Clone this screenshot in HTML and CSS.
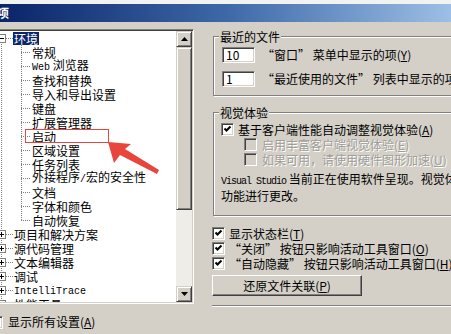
FILE: index.html
```html
<!DOCTYPE html>
<html lang="zh-CN">
<head>
<meta charset="utf-8">
<title>选项</title>
<link rel="stylesheet" href="styles.css">
</head>
<body>
<div class="screen">
  <div class="topstrip"></div>
  <div class="titlebar"><span class="title">项</span></div>

  <div class="main">
    <div class="treebox">
      <div class="tree">
        <div class="row root">
          <svg class="exp" width="9" height="9" viewBox="0 0 9 9"><rect x="0.5" y="0.5" width="8" height="8" fill="#fff" stroke="#808080"/><path d="M2 4.5h5" stroke="#000"/></svg>
          <span class="hconn"></span><span class="label sel">环境</span>
        </div>
        <div class="row child"><span class="conn"></span><span class="label">常规</span></div>
        <div class="row child"><span class="conn"></span><span class="label"><span class="lat">Web</span> 浏览器</span></div>
        <div class="row child"><span class="conn"></span><span class="label">查找和替换</span></div>
        <div class="row child"><span class="conn"></span><span class="label">导入和导出设置</span></div>
        <div class="row child"><span class="conn"></span><span class="label">键盘</span></div>
        <div class="row child"><span class="conn"></span><span class="label">扩展管理器</span></div>
        <div class="row child"><span class="conn"></span><span class="label">启动</span></div>
        <div class="row child"><span class="conn"></span><span class="label">区域设置</span></div>
        <div class="row child"><span class="conn"></span><span class="label">任务列表</span></div>
        <div class="row child"><span class="conn"></span><span class="label">外接程序<span class="lat">/</span>宏的安全性</span></div>
        <div class="row child"><span class="conn"></span><span class="label">文档</span></div>
        <div class="row child"><span class="conn"></span><span class="label">字体和颜色</span></div>
        <div class="row child last"><span class="conn"></span><span class="label">自动恢复</span></div>
        <div class="row root">
          <svg class="exp" width="9" height="9" viewBox="0 0 9 9"><rect x="0.5" y="0.5" width="8" height="8" fill="#fff" stroke="#808080"/><path d="M2 4.5h5M4.5 2v5" stroke="#000"/></svg>
          <span class="hconn"></span><span class="label">项目和解决方案</span>
        </div>
        <div class="row root">
          <svg class="exp" width="9" height="9" viewBox="0 0 9 9"><rect x="0.5" y="0.5" width="8" height="8" fill="#fff" stroke="#808080"/><path d="M2 4.5h5M4.5 2v5" stroke="#000"/></svg>
          <span class="hconn"></span><span class="label">源代码管理</span>
        </div>
        <div class="row root">
          <svg class="exp" width="9" height="9" viewBox="0 0 9 9"><rect x="0.5" y="0.5" width="8" height="8" fill="#fff" stroke="#808080"/><path d="M2 4.5h5M4.5 2v5" stroke="#000"/></svg>
          <span class="hconn"></span><span class="label">文本编辑器</span>
        </div>
        <div class="row root">
          <svg class="exp" width="9" height="9" viewBox="0 0 9 9"><rect x="0.5" y="0.5" width="8" height="8" fill="#fff" stroke="#808080"/><path d="M2 4.5h5M4.5 2v5" stroke="#000"/></svg>
          <span class="hconn"></span><span class="label">调试</span>
        </div>
        <div class="row root">
          <svg class="exp" width="9" height="9" viewBox="0 0 9 9"><rect x="0.5" y="0.5" width="8" height="8" fill="#fff" stroke="#808080"/><path d="M2 4.5h5M4.5 2v5" stroke="#000"/></svg>
          <span class="hconn"></span><span class="label"><span class="lat">IntelliTrace</span></span>
        </div>
        <div class="row root">
          <svg class="exp" width="9" height="9" viewBox="0 0 9 9"><rect x="0.5" y="0.5" width="8" height="8" fill="#fff" stroke="#808080"/><path d="M2 4.5h5M4.5 2v5" stroke="#000"/></svg>
          <span class="hconn"></span><span class="label">性能工具</span>
        </div>
      </div>
      <div class="vscroll">
        <div class="sbtn"><svg width="7" height="4" viewBox="0 0 7 4"><path d="M3.5 0L7 4H0z" fill="#000"/></svg></div>
        <div class="thumb"></div>
        <div class="track"></div>
        <div class="sbtn"><svg width="7" height="4" viewBox="0 0 7 4"><path d="M0 0H7L3.5 4z" fill="#000"/></svg></div>
      </div>
    </div>

    <div class="right">
      <div class="group g1">
        <div class="legend">最近的文件</div>
        <div class="frow first"><span class="input">10</span><span class="ftext">“窗口” 菜单中显示的项(<u>Y</u>)</span></div>
        <div class="frow"><span class="input">1</span><span class="ftext">“最近使用的文件” 列表中显示的项(<u>R</u>)</span></div>
      </div>

      <div class="group g2">
        <div class="legend">视觉体验</div>
        <div class="cbrow main-cb">
          <span class="cb"><svg width="11" height="11" viewBox="0 0 11 11"><path d="M2.5 4.5L4.5 6.5L8.5 2.5" fill="none" stroke="#000" stroke-width="2"/></svg></span>
          <span>基于客户端性能自动调整视觉体验(<u>A</u>)</span>
        </div>
        <div class="cbrow sub-cb disabled">
          <span class="cb off"></span>
          <span>启用丰富客户端视觉体验(<u>E</u>)</span>
        </div>
        <div class="cbrow sub-cb disabled">
          <span class="cb off"></span>
          <span>如果可用，请使用硬件图形加速(<u>U</u>)</span>
        </div>
        <div class="note">
          <div><span class="vs">Visual Studio</span> 当前正在使用软件呈现。视觉体验</div>
          <div>功能进行更改。</div>
        </div>
      </div>

      <div class="checks">
        <div class="cbrow">
          <span class="cb"><svg width="11" height="11" viewBox="0 0 11 11"><path d="M2.5 4.5L4.5 6.5L8.5 2.5" fill="none" stroke="#000" stroke-width="2"/></svg></span>
          <span>显示状态栏(<u>T</u>)</span>
        </div>
        <div class="cbrow">
          <span class="cb"><svg width="11" height="11" viewBox="0 0 11 11"><path d="M2.5 4.5L4.5 6.5L8.5 2.5" fill="none" stroke="#000" stroke-width="2"/></svg></span>
          <span>“关闭” 按钮只影响活动工具窗口(<u>O</u>)</span>
        </div>
        <div class="cbrow">
          <span class="cb"><svg width="11" height="11" viewBox="0 0 11 11"><path d="M2.5 4.5L4.5 6.5L8.5 2.5" fill="none" stroke="#000" stroke-width="2"/></svg></span>
          <span>“自动隐藏” 按钮只影响活动工具窗口(<u>H</u>)</span>
        </div>
      </div>

      <div class="button">还原文件关联(<u>P</u>)</div>
      <div class="sep"></div>
    </div>
  </div>

  <div class="footer">
    <span class="cb"></span>
    <span>显示所有设置(<u>A</u>)</span>
  </div>

  <div class="annot-box"></div>
  <svg class="annot-arrow" width="451" height="334" viewBox="0 0 451 334">
    <polygon points="108,142 131,144 125,149 159,170 157,174 120,155 114,163" fill="#e8453c"/>
  </svg>
</div>
</body>
</html>
```

FILE: styles.css
```css
* { box-sizing: border-box; }

html, body {
  margin: 0;
  padding: 0;
}

body {
  width: 451px;
  height: 334px;
  overflow: hidden;
  background: #d4d0c8;
  font-family: "Noto Sans CJK SC", "Liberation Sans", sans-serif;
  font-size: 12px;
  line-height: 14px;
  color: #000;
}

u { text-decoration: underline; text-underline-offset: 1px; }

.screen {
  position: relative;
  width: 451px;
  height: 334px;
  overflow: hidden;
}

.topstrip {
  height: 4px;
  background: #f2f2f0;
}

.titlebar {
  height: 18px;
  display: flex;
  align-items: center;
  background: linear-gradient(90deg, #0a246a 0%, #3d68a8 50%, #9cbfe6 100%);
  color: #fff;
  font-weight: bold;
}

.title { margin-left: -3px; }

.main {
  display: flex;
  align-items: flex-start;
  gap: 19px;
  margin-top: 7px;
  height: 276px;
}

/* ---------- tree ---------- */
.treebox {
  flex: 0 0 198px;
  margin-left: -4px;
  height: 275px;
  display: flex;
  background: #fff;
  border: 1px solid;
  border-color: #808080 #fff #fff #808080;
  padding: 1px;
  box-shadow: inset 1px 1px #404040, inset -1px -1px #d4d0c8;
}

.tree {
  flex: 1;
  min-width: 0;
  overflow: hidden;
  background: repeating-linear-gradient(#808080 0 1px, transparent 1px 2px) 3px 7px / 1px 100% no-repeat;
}

.row {
  height: 14px;
  display: flex;
  align-items: center;
  white-space: nowrap;
}

.exp {
  display: block;
  flex: none;
  margin-left: -1px;
}

.hconn {
  flex: none;
  width: 7px;
  height: 1px;
  background: repeating-linear-gradient(90deg, #808080 0 1px, transparent 1px 2px);
}

.label {
  padding: 0 1px;
  line-height: 13px;
}

.sel {
  background: #0a246a;
  color: #fff;
}

.child { padding-left: 23px; }

.conn {
  flex: none;
  width: 10px;
  height: 14px;
  background:
    repeating-linear-gradient(#808080 0 1px, transparent 1px 2px) 0 0 / 1px 100% no-repeat,
    repeating-linear-gradient(90deg, #808080 0 1px, transparent 1px 2px) 0 7px / 100% 1px no-repeat;
}

.last .conn {
  background:
    repeating-linear-gradient(#808080 0 1px, transparent 1px 2px) 0 0 / 1px 8px no-repeat,
    repeating-linear-gradient(90deg, #808080 0 1px, transparent 1px 2px) 0 7px / 100% 1px no-repeat;
}

.lat {
  font-family: "Liberation Mono", monospace;
  font-size: 10px;
}

/* ---------- scrollbar ---------- */
.vscroll {
  flex: 0 0 16px;
  display: flex;
  flex-direction: column;
}

.sbtn, .thumb {
  background: #d4d0c8;
  border: 1px solid;
  border-color: #d4d0c8 #404040 #404040 #d4d0c8;
  box-shadow: inset 1px 1px #fff, inset -1px -1px #808080;
}

.sbtn {
  height: 16px;
  flex: none;
  display: flex;
  align-items: center;
  justify-content: center;
}

.sbtn svg { display: block; }

.thumb {
  height: 163px;
  flex: none;
}

.track {
  flex: 1;
  background: #efede8;
}

/* ---------- right side ---------- */
.right {
  flex: 0 0 260px;
  display: flex;
  flex-direction: column;
  white-space: nowrap;
}

.group {
  border: 1px solid #808080;
  box-shadow: inset 1px 1px #fff, 1px 1px #fff;
}

.legend {
  width: max-content;
  margin: -7px 0 0 5px;
  padding: 0 1px;
  background: #d4d0c8;
  line-height: 14px;
}

.g1 {
  margin-top: 7px;
  height: 60px;
}

.frow {
  display: flex;
  align-items: center;
  gap: 7px;
  padding-left: 8px;
  margin-top: 8px;
}

.frow.first { margin-top: 3px; }

.input {
  flex: none;
  width: 33px;
  height: 16px;
  padding-left: 3px;
  line-height: 14px;
  background: #fff;
  border: 1px solid;
  border-color: #808080 #fff #fff #808080;
  box-shadow: inset 1px 1px #404040, inset -1px -1px #d4d0c8;
}

.g2 {
  margin-top: 16px;
  height: 104px;
}

.cbrow {
  height: 15px;
  display: flex;
  align-items: center;
  gap: 4px;
}

.main-cb {
  margin-top: 2px;
  padding-left: 7px;
}

.sub-cb {
  padding-left: 30px;
  gap: 5px;
}

.disabled {
  color: #a09e98;
  text-shadow: 1px 1px #fff;
}

.cb {
  flex: none;
  width: 13px;
  height: 13px;
  background: #fff;
  border: 1px solid;
  border-color: #808080 #fff #fff #808080;
  box-shadow: inset 1px 1px #404040, inset -1px -1px #d4d0c8;
}

.cb svg { display: block; }

.cb.off { background: #d4d0c8; }

.note {
  margin-top: 5px;
  padding-left: 7px;
}

.vs {
  font-family: "Liberation Mono", monospace;
  font-size: 10px;
  letter-spacing: -1px;
}

.checks {
  margin-top: 10px;
  margin-left: -1px;
}

.button {
  margin-top: 4px;
  margin-left: -1px;
  width: 150px;
  height: 21px;
  display: flex;
  align-items: center;
  justify-content: center;
  background: #d4d0c8;
  border: 1px solid;
  border-color: #fff #404040 #404040 #fff;
  box-shadow: inset -1px -1px #808080;
}

.sep {
  margin-top: 9px;
  margin-left: -1px;
  height: 2px;
  border-top: 1px solid #808080;
  border-bottom: 1px solid #fff;
}

/* ---------- footer ---------- */
.footer {
  display: flex;
  align-items: center;
  gap: 5px;
  margin-top: 10px;
  margin-left: -10px;
  height: 14px;
}

/* ---------- annotation overlay ---------- */
.annot-box {
  position: absolute;
  left: 25px;
  top: 129px;
  width: 84px;
  height: 14px;
  border: 1px solid #e5473f;
}

.annot-arrow {
  position: absolute;
  left: 0;
  top: 0;
  pointer-events: none;
}
```
